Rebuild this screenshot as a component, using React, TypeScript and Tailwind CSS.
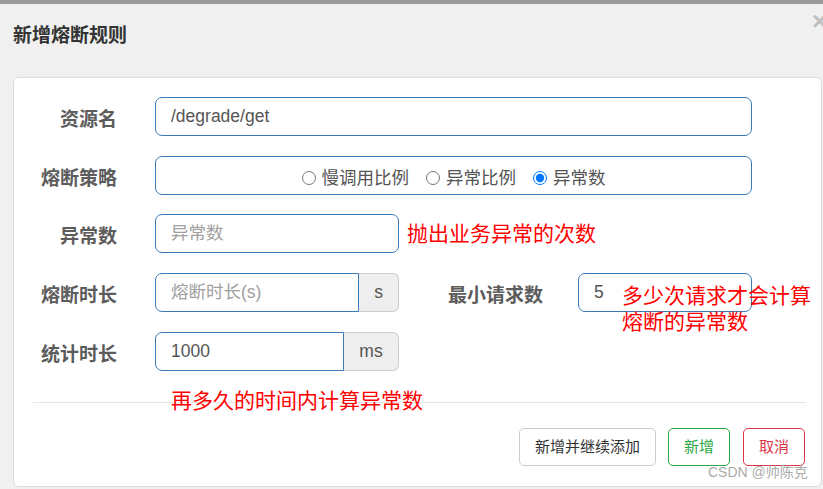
import React from "react";

const font = "font-['Liberation_Sans','Noto_Sans_CJK_SC',sans-serif]";

const Label = ({ text, className = "" }: { text: string; className?: string }) => (
  <div className={`shrink-0 pt-[7px] text-right text-[19px] font-bold text-[#5c5c5c] ${className}`}>{text}</div>
);

const inputCls =
  "h-full border border-[#3a7ab8] bg-white px-[15px] text-[17.5px] text-[#555] placeholder:text-[#a0a0a0] outline-none";

const Addon = ({ text, w }: { text: string; w: string }) => (
  <div
    className={`flex h-full ${w} items-center justify-center rounded-r-[6px] border border-l-0 border-[#ccc] bg-[#eee] text-[17.5px] text-[#555]`}
  >
    {text}
  </div>
);

const Radio = ({ text, checked }: { text: string; checked?: boolean }) => (
  <label className="flex items-center gap-[6px]">
    <input type="radio" name="grade" defaultChecked={checked} className="m-0 h-[14px] w-[14px]" />
    <span>{text}</span>
  </label>
);

export default function App() {
  return (
    <div className={`relative h-[489px] w-[823px] overflow-hidden bg-[#f0f0f0] ${font}`}>
      <div className="h-[4px] bg-[#9a9a9a]" />
      <div className="h-[73px] pl-[13px] pt-[17px] text-[19px] font-bold leading-[30px] text-[#333]">
        新增熔断规则
      </div>
      <div className="absolute left-[812px] top-[6px] text-[26px] font-bold leading-[30px] text-[#c0c0c0]">×</div>

      <div className="relative ml-[13px] h-[410px] w-[809px] rounded-[6px] border border-[#dcdcdc] bg-white pt-[19px]">
        {/* 资源名 */}
        <div className="mb-[20px] flex h-[39px] items-center">
          <Label text="资源名" className="w-[141px] pr-[38px]" />
          <input className={`${inputCls} w-[597px] rounded-[7px]`} defaultValue="/degrade/get" />
        </div>

        {/* 熔断策略 */}
        <div className="mb-[19px] flex h-[39px] items-center">
          <Label text="熔断策略" className="w-[141px] pr-[38px]" />
          <div className="flex h-full w-[597px] items-center justify-center gap-[17px] rounded-[7px] border border-[#3a7ab8] pt-[5px] text-[17.5px] text-[#555]">
            <Radio text="慢调用比例" />
            <Radio text="异常比例" />
            <Radio text="异常数" checked />
          </div>
        </div>

        {/* 异常数 */}
        <div className="mb-[20px] flex h-[39px] items-center">
          <Label text="异常数" className="w-[141px] pr-[38px]" />
          <input className={`${inputCls} w-[244px] rounded-[7px]`} placeholder="异常数" />
          <span className="ml-[8px] text-[21px] font-normal text-[#ff0000]">抛出业务异常的次数</span>
        </div>

        {/* 熔断时长 / 最小请求数 */}
        <div className="relative mb-[20px] flex h-[39px] items-center">
          <Label text="熔断时长" className="w-[141px] pr-[38px]" />
          <div className="flex h-full w-[244px]">
            <input className={`${inputCls} w-[204px] rounded-l-[7px]`} placeholder="熔断时长(s)" />
            <Addon text="s" w="w-[40px]" />
          </div>
          <Label text="最小请求数" className="w-[179px] pr-[35px]" />
          <input className={`${inputCls} w-[174px] rounded-[7px]`} defaultValue="5" />
          <div className="absolute left-[608px] top-[10px] text-[21px] leading-[26px] text-[#ff0000]">
            多少次请求才会计算
            <br />
            熔断的异常数
          </div>
        </div>

        {/* 统计时长 */}
        <div className="flex h-[39px] items-center">
          <Label text="统计时长" className="w-[141px] pr-[38px]" />
          <div className="flex h-full w-[244px]">
            <input className={`${inputCls} w-[189px] rounded-l-[7px]`} defaultValue="1000" />
            <Addon text="ms" w="w-[55px]" />
          </div>
        </div>

        <div className="relative ml-[19px] mt-[31px] h-px w-[773px] bg-[#e5e5e5]">
          <span className="absolute left-[138px] top-[-15px] whitespace-nowrap text-[21px] leading-[28px] text-[#ff0000]">
            再多久的时间内计算异常数
          </span>
        </div>

        <div className="mt-[25px] flex justify-end gap-[12px] pr-[16px] text-[15px]">
          <button className="h-[38px] w-[137px] rounded-[5px] border border-[#ccc] bg-white text-[#333]">
            新增并继续添加
          </button>
          <button className="h-[38px] w-[62px] rounded-[5px] border border-[#28a745] bg-white text-[#28a745]">
            新增
          </button>
          <button className="ml-[1px] h-[38px] w-[62px] rounded-[5px] border border-[#dc3545] bg-white text-[#dc3545]">
            取消
          </button>
        </div>
      </div>

      <div className="absolute left-[708px] top-[461px] text-[14px] leading-[22px] text-[#9e9e9e]/90">CSDN @帅陈克</div>
    </div>
  );
}
